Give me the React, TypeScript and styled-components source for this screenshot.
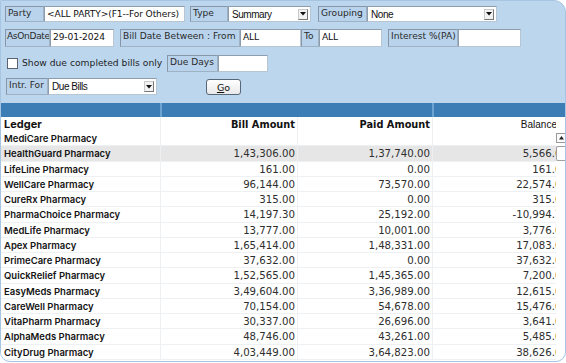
import React from "react";
import styled, { createGlobalStyle } from "styled-components";

const Global = createGlobalStyle`
  html, body { margin: 0; padding: 0; background: #ffffff; }
  body { width: 566px; height: 363px; overflow: hidden; }
`;

const Panel = styled.div`
  box-sizing: border-box;
  width: 566px;
  height: 362px;
  background: #bcd6ee;
  border: 1px solid #a6c5e3;
  border-radius: 0 12px 10px 10px;
  overflow: hidden;
  display: flex;
  flex-direction: column;
`;

const Form = styled.div`
  display: flex;
  flex-direction: column;
  padding: 5px 0 0 4px;
`;

const Row = styled.div<{ $h: number; $mt: number }>`
  display: flex;
  align-items: stretch;
  height: ${(p) => p.$h}px;
  margin-top: ${(p) => p.$mt}px;
`;

const Label = styled.div<{ $w: number; $ml?: number; $tight?: boolean }>`
  box-sizing: border-box;
  width: ${(p) => p.$w}px;
  margin-left: ${(p) => p.$ml ?? 0}px;
  border: 1px solid #8797a7;
  border-right-color: #9fb2c4;
  border-bottom-color: #9fb2c4;
  background: #b9d3ec;
  font-family: "DejaVu Sans", Verdana, sans-serif;
  font-size: 9.1px;
  letter-spacing: ${(p) => (p.$tight ? "-0.35px" : "0")};
  color: #2a2a2a;
  padding: 1px 0 0 ${(p) => (p.$tight ? 1 : 2)}px;
  white-space: nowrap;
  overflow: hidden;
`;

const Input = styled.div<{ $w: number }>`
  box-sizing: border-box;
  width: ${(p) => p.$w}px;
  background: #ffffff;
  border: 1px solid #8d9dad;
  border-right-color: #b8c6d3;
  border-bottom-color: #b8c6d3;
  font-family: "DejaVu Sans", Verdana, sans-serif;
  font-size: 9.1px;
  letter-spacing: -0.1px;
  color: #111;
  padding: 2px 0 0 2px;
  white-space: nowrap;
  overflow: hidden;
`;

const Select = styled.div<{ $w: number }>`
  box-sizing: border-box;
  width: ${(p) => p.$w}px;
  background: #ffffff;
  border: 1px solid #8d9dad;
  border-right-color: #b8c6d3;
  border-bottom-color: #b8c6d3;
  display: flex;
  align-items: center;
  justify-content: space-between;
  padding: 0 2px 0 3px;
  font-family: "Liberation Sans", Arial, sans-serif;
  font-size: 10px;
  letter-spacing: -0.45px;
  color: #111;
`;

const Arrow = styled.span`
  box-sizing: border-box;
  width: 10px;
  height: 11px;
  border: 1px solid #c9c9c9;
  border-right-color: #777;
  border-bottom-color: #777;
  background: #f2f2f2;
  display: flex;
  align-items: center;
  justify-content: center;
`;

const Check = styled.span`
  box-sizing: border-box;
  width: 11px;
  height: 11px;
  margin: 3px 0 0 2px;
  background: #fff;
  border: 1px solid #5b6470;
`;

const CheckText = styled.span`
  font-family: "DejaVu Sans", Verdana, sans-serif;
  font-size: 9.2px;
  color: #1e1e1e;
  margin-left: 4px;
  padding-top: 2px;
  width: 141px;
  white-space: nowrap;
`;

const GoButton = styled.div`
  box-sizing: border-box;
  width: 35px;
  height: 16px;
  margin: 1px 0 0 49px;
  border: 1px solid #56677a;
  border-radius: 3px;
  background: linear-gradient(#ffffff, #e9e9e9);
  font-family: "DejaVu Sans", Verdana, sans-serif;
  font-size: 9.5px;
  color: #111;
  display: flex;
  align-items: center;
  justify-content: center;
  & u { text-decoration: underline; }
`;

const HeadBar = styled.div`
  margin-top: 8px;
  height: 14px;
  background: #3c7db6;
  display: grid;
  grid-template-columns: 159px 272px 1fr;
  & > div + div { border-left: 2px solid #6ea4d1; }
`;

const TableArea = styled.div`
  flex: 1;
  display: flex;
  background: #ffffff;
  min-height: 0;
`;

const Clip = styled.div`
  width: 556px;
  overflow: hidden;
`;

const Grid = styled.div`
  width: 570px;
  display: grid;
  grid-template-columns: 160px 137px 135px 138px;
`;

const HeadCell = styled.div<{ $align: "left" | "right"; $pr?: number; $reg?: boolean }>`
  height: 14px;
  line-height: 15px;
  text-align: ${(p) => p.$align};
  padding: 0 ${(p) => p.$pr ?? 2}px 0 3px;
  font-family: ${(p) => (p.$reg ? `"Liberation Sans", Arial, sans-serif` : `"DejaVu Sans", Verdana, sans-serif`)};
  font-size: ${(p) => (p.$reg ? "10px" : "9.8px")};
  font-weight: ${(p) => (p.$reg ? 400 : 700)};
  color: #111;
  border-right: 1px solid #eef1f4;
  white-space: nowrap;
`;

const LedgerHead = styled(HeadCell)`
  font-family: Inter, "Liberation Sans", sans-serif;
  font-size: 11px;
`;

const Cell = styled.div<{ $hl: boolean; $name?: boolean }>`
  height: 15.25px;
  line-height: 15.5px;
  box-sizing: border-box;
  border-bottom: 1px solid #eef1f3;
  border-right: 1px solid #eef1f4;
  background: ${(p) => (p.$hl ? "#e6e6e6" : "#ffffff")};
  text-align: ${(p) => (p.$name ? "left" : "right")};
  padding: 0 2px 0 3px;
  font-family: ${(p) => (p.$name ? `Inter, "Liberation Sans", sans-serif` : `"DejaVu Sans", Verdana, sans-serif`)};
  font-size: ${(p) => (p.$name ? "9.5px" : "10.2px")};
  font-weight: ${(p) => (p.$name ? 600 : 400)};
  color: ${(p) => (p.$name ? "#141414" : "#2e2e2e")};
  white-space: nowrap;
`;

const Scroll = styled.div`
  flex: 1;
  display: flex;
  flex-direction: column;
  align-items: flex-start;
  padding-top: 16px;
`;

const ScrollUp = styled.div`
  box-sizing: border-box;
  width: 9px;
  height: 10px;
  border: 1px solid #9a9a9a;
  border-right: none;
  background: #fafafa;
  display: flex;
  align-items: center;
  justify-content: center;
`;

const Thumb = styled.div`
  box-sizing: border-box;
  width: 9px;
  height: 15px;
  margin-top: 3px;
  border: 1px solid #a0a0a0;
  border-right: none;
  border-radius: 2px 0 0 2px;
  background: #fff;
`;

const rows: [string, string, string, string][] = [
  ["MediCare Pharmacy", "", "", ""],
  ["HealthGuard Pharmacy", "1,43,306.00", "1,37,740.00", "5,566.00"],
  ["LifeLine Pharmacy", "161.00", "0.00", "161.00"],
  ["WellCare Pharmacy", "96,144.00", "73,570.00", "22,574.00"],
  ["CureRx Pharmacy", "315.00", "0.00", "315.00"],
  ["PharmaChoice Pharmacy", "14,197.30", "25,192.00", "-10,994.70"],
  ["MedLife Pharmacy", "13,777.00", "10,001.00", "3,776.00"],
  ["Apex Pharmacy", "1,65,414.00", "1,48,331.00", "17,083.00"],
  ["PrimeCare Pharmacy", "37,632.00", "0.00", "37,632.00"],
  ["QuickRelief Pharmacy", "1,52,565.00", "1,45,365.00", "7,200.00"],
  ["EasyMeds Pharmacy", "3,49,604.00", "3,36,989.00", "12,615.00"],
  ["CareWell Pharmacy", "70,154.00", "54,678.00", "15,476.00"],
  ["VitaPharm Pharmacy", "30,337.00", "26,696.00", "3,641.00"],
  ["AlphaMeds Pharmacy", "48,746.00", "43,261.00", "5,485.00"],
  ["CityDrug Pharmacy", "4,03,449.00", "3,64,823.00", "38,626.00"],
];

const DropArrow = () => (
  <Arrow>
    <svg width="6" height="4" viewBox="0 0 6 4">
      <path d="M0 0 H6 L3 3.5 Z" fill="#111" />
    </svg>
  </Arrow>
);

export default function App() {
  return (
    <>
      <Global />
      <Panel>
        <Form>
          <Row $h={16} $mt={0}>
            <Label $w={39}>Party</Label>
            <Input $w={141}>&lt;ALL PARTY&gt;(F1--For Others)</Input>
            <Label $w={38} $ml={5}>Type</Label>
            <Select $w={83}>
              Summary
              <DropArrow />
            </Select>
            <Label $w={49} $ml={7}>Grouping</Label>
            <Select $w={130}>
              None
              <DropArrow />
            </Select>
          </Row>
          <Row $h={18} $mt={7}>
            <Label $w={45} $tight>AsOnDate</Label>
            <Input $w={64}>29-01-2024</Input>
            <Label $w={120} $ml={6}>Bill Date Between : From</Label>
            <Input $w={61}>ALL</Input>
            <Label $w={18}>To</Label>
            <Input $w={63}>ALL</Input>
            <Label $w={70} $ml={6}>Interest %(PA)</Label>
            <Input $w={63}></Input>
          </Row>
          <Row $h={17} $mt={8}>
            <Check />
            <CheckText>Show due completed bills only</CheckText>
            <Label $w={51} $ml={4}>Due Days</Label>
            <Input $w={50}></Input>
          </Row>
          <Row $h={17} $mt={6}>
            <Label $w={42} $ml={1}>Intr. For</Label>
            <Select $w={109}>
              Due Bills
              <DropArrow />
            </Select>
            <GoButton>
              <span>
                <u>G</u>o
              </span>
            </GoButton>
          </Row>
        </Form>
        <HeadBar>
          <div />
          <div />
          <div />
        </HeadBar>
        <TableArea>
          <Clip>
            <Grid>
              <LedgerHead $align="left">Ledger</LedgerHead>
              <HeadCell $align="right">Bill Amount</HeadCell>
              <HeadCell $align="right">Paid Amount</HeadCell>
              <HeadCell $align="right" $pr={13} $reg>
                Balance
              </HeadCell>
              {rows.map((r, i) => (
                <React.Fragment key={r[0]}>
                  <Cell $hl={i === 1} $name>
                    {r[0]}
                  </Cell>
                  <Cell $hl={i === 1}>{r[1]}</Cell>
                  <Cell $hl={i === 1}>{r[2]}</Cell>
                  <Cell $hl={i === 1}>{r[3]}</Cell>
                </React.Fragment>
              ))}
            </Grid>
          </Clip>
          <Scroll>
            <ScrollUp>
              <svg width="5" height="4" viewBox="0 0 5 4">
                <path d="M0 3.5 H5 L2.5 0 Z" fill="#222" />
              </svg>
            </ScrollUp>
            <Thumb />
          </Scroll>
        </TableArea>
      </Panel>
    </>
  );
}
